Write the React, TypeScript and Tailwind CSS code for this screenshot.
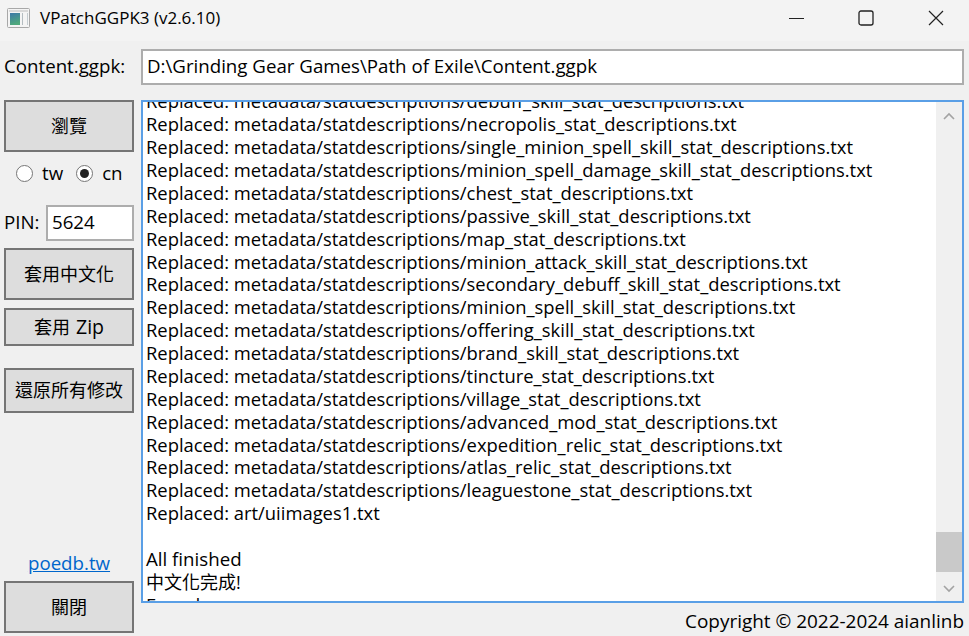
import type { ReactNode } from "react";

const logLines = [
  "Replaced: metadata/statdescriptions/debuff_skill_stat_descriptions.txt",
  "Replaced: metadata/statdescriptions/necropolis_stat_descriptions.txt",
  "Replaced: metadata/statdescriptions/single_minion_spell_skill_stat_descriptions.txt",
  "Replaced: metadata/statdescriptions/minion_spell_damage_skill_stat_descriptions.txt",
  "Replaced: metadata/statdescriptions/chest_stat_descriptions.txt",
  "Replaced: metadata/statdescriptions/passive_skill_stat_descriptions.txt",
  "Replaced: metadata/statdescriptions/map_stat_descriptions.txt",
  "Replaced: metadata/statdescriptions/minion_attack_skill_stat_descriptions.txt",
  "Replaced: metadata/statdescriptions/secondary_debuff_skill_stat_descriptions.txt",
  "Replaced: metadata/statdescriptions/minion_spell_skill_stat_descriptions.txt",
  "Replaced: metadata/statdescriptions/offering_skill_stat_descriptions.txt",
  "Replaced: metadata/statdescriptions/brand_skill_stat_descriptions.txt",
  "Replaced: metadata/statdescriptions/tincture_stat_descriptions.txt",
  "Replaced: metadata/statdescriptions/village_stat_descriptions.txt",
  "Replaced: metadata/statdescriptions/advanced_mod_stat_descriptions.txt",
  "Replaced: metadata/statdescriptions/expedition_relic_stat_descriptions.txt",
  "Replaced: metadata/statdescriptions/atlas_relic_stat_descriptions.txt",
  "Replaced: metadata/statdescriptions/leaguestone_stat_descriptions.txt",
  "Replaced: art/uiimages1.txt",
  "\u00a0",
];

function WinButton({ children, className }: { children: ReactNode; className: string }) {
  return (
    <button className={`flex w-[130px] items-center justify-center border-2 border-[#757575] bg-[#dddddd] text-[18px] text-black ${className}`}>
      {children}
    </button>
  );
}

function Radio({ label, checked }: { label: string; checked?: boolean }) {
  return (
    <div className="flex items-center gap-[9px]">
      <span className="flex h-[17px] w-[17px] items-center justify-center rounded-full border border-[#767676] bg-white">
        {checked && <span className="h-[9px] w-[9px] rounded-full bg-[#222222]" />}
      </span>
      <span>{label}</span>
    </div>
  );
}

export default function App() {
  return (
    <div className="flex h-[636px] w-[969px] flex-col overflow-hidden bg-[#f0f0f0] text-[18.7px] text-black [font-family:'Open_Sans','Noto_Sans_CJK_TC',sans-serif]">
      {/* title bar */}
      <div className="flex h-[41px] items-center bg-[#f3f3f3] pb-[5px]">
        <svg width="23" height="20" viewBox="0 0 23 20" className="ml-[7px]">
          <defs>
            <linearGradient id="pane" x1="0" y1="0" x2="0.3" y2="1">
              <stop offset="0" stopColor="#3d78a8" />
              <stop offset="1" stopColor="#4fa97c" />
            </linearGradient>
          </defs>
          <rect x="0.5" y="0.5" width="22" height="19" rx="1" fill="#f4f4f4" stroke="#a8a8a8" />
          <rect x="2" y="2" width="19" height="2" fill="#d8d8d8" />
          <rect x="3" y="5" width="10" height="12" fill="url(#pane)" />
          <rect x="15" y="5" width="1" height="12" fill="#b4bcc0" />
          <rect x="20" y="5" width="1" height="12" fill="#c4ccd0" />
        </svg>
        <span className="ml-[10px] text-[17px]">VPatchGGPK3 (v2.6.10)</span>
        <div className="ml-auto flex items-center">
          <svg width="16" height="16" viewBox="0 0 16 16" className="mr-[54px]">
            <path d="M1 8.5H16" stroke="#222" strokeWidth="1" />
          </svg>
          <svg width="16" height="16" viewBox="0 0 16 16" className="mr-[54px]">
            <rect x="1" y="1" width="14" height="14" rx="2" fill="none" stroke="#222" strokeWidth="1.3" />
          </svg>
          <svg width="16" height="16" viewBox="0 0 16 16" className="mr-[25px]">
            <path d="M1 1L15 15M15 1L1 15" stroke="#222" strokeWidth="1.2" />
          </svg>
        </div>
      </div>

      {/* path row */}
      <div className="mt-[8px] flex h-[36px] items-center pr-[5px] pl-[4px]">
        <span className="w-[137px] shrink-0 pb-[2px]">Content.ggpk:</span>
        <div className="flex h-full flex-1 items-center border-2 border-[#adadad] bg-white pb-[2px] pl-[4px]">
          D:\Grinding Gear Games\Path of Exile\Content.ggpk
        </div>
      </div>

      {/* main area */}
      <div className="mt-[15px] flex flex-1 pr-[5px] pl-[4px]">
        <div className="mr-[7px] flex w-[130px] shrink-0 flex-col">
          <WinButton className="h-[52px]">瀏覽</WinButton>
          <div className="mt-[13px] flex h-[17px] items-center gap-[13px] pl-[12px]">
            <Radio label="tw" />
            <Radio label="cn" checked />
          </div>
          <div className="mt-[23px] flex h-[36px] items-center justify-between">
            <span className="pb-[2px]">PIN:</span>
            <div className="flex h-full w-[88px] items-center border-2 border-[#adadad] bg-white pb-[1px] pl-[4px]">5624</div>
          </div>
          <WinButton className="mt-[7px] h-[52px]">套用中文化</WinButton>
          <WinButton className="mt-[8px] h-[38px]">
            套用<span className="ml-[6px] text-[19.5px]">Zip</span>
          </WinButton>
          <WinButton className="mt-[22px] h-[45px]">還原所有修改</WinButton>
          <a className="mt-[136px] text-center text-[#0066cc] underline">poedb.tw</a>
          <WinButton className="mt-[4px] h-[52px]">關閉</WinButton>
        </div>

        <div className="flex flex-1 flex-col">
          <div className="flex h-[503px] border-2 border-[#5a9fe6] bg-white">
            <div className="flex-1 overflow-hidden pl-[3px]">
              <div className="mt-[-11.6px] text-[18.4px] leading-[22.87px] whitespace-nowrap">
                {logLines.map((line, i) => (
                  <div key={i}>{line}</div>
                ))}
                <div className="text-[18.7px]">All finished</div>
                <div className="text-[18px]">中文化完成!</div>
                <div>Found</div>
              </div>
            </div>
            {/* scrollbar */}
            <div className="flex w-[26px] flex-col items-center bg-[#f0f0f0]">
              <svg width="12" height="8" viewBox="0 0 12 8" className="mt-[10px]">
                <path d="M1 7L6 2L11 7" fill="none" stroke="#a3a3a3" strokeWidth="1.6" />
              </svg>
              <div className="mt-[412px] h-[40px] w-full bg-[#c9c9c9]" />
              <svg width="12" height="8" viewBox="0 0 12 8" className="mt-[13px]">
                <path d="M1 1L6 6L11 1" fill="none" stroke="#a3a3a3" strokeWidth="1.6" />
              </svg>
            </div>
          </div>
          <div className="mt-[4px] text-right text-[18.95px]">Copyright © 2022-2024 aianlinb</div>
        </div>
      </div>
    </div>
  );
}
